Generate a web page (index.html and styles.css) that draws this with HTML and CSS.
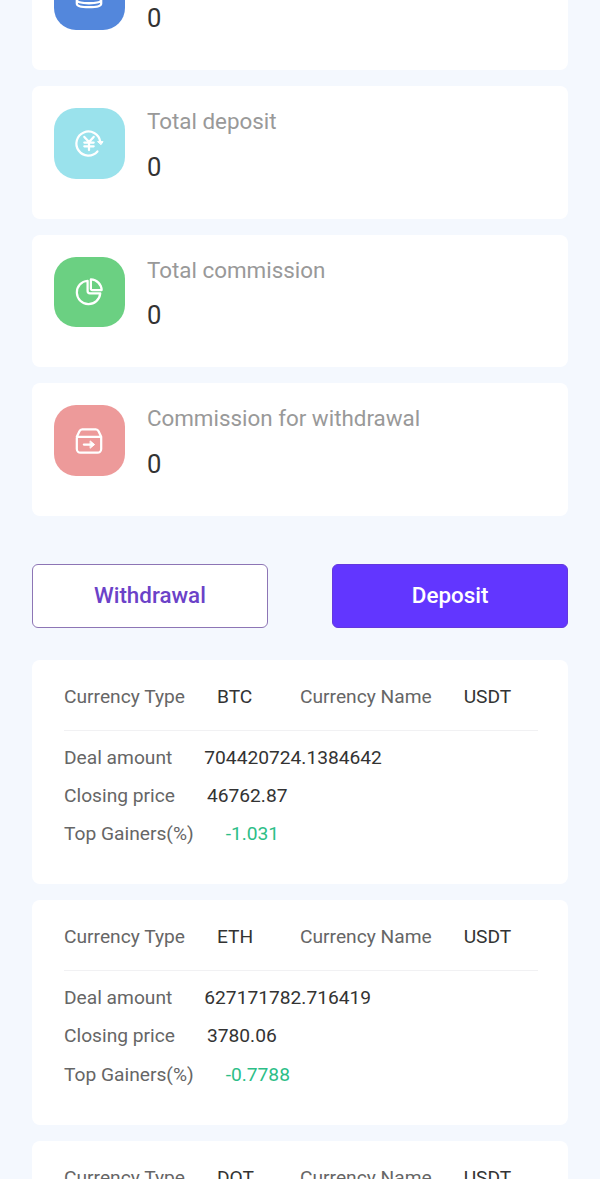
FILE: index.html
```
<!DOCTYPE html>
<html lang="en">
<head>
  <meta charset="UTF-8">
  <meta name="viewport" content="width=device-width, initial-scale=1.0">
  <title>Assets</title>
  <link rel="stylesheet" href="styles.css">
</head>
<body>
  <div class="page">
    <!-- totals -->
    <div class="stats">
      <div class="stat">
        <div class="icon blue">
          <svg viewBox="0 0 32 32"><ellipse cx="16" cy="8" rx="13" ry="4.5"/><path d="M3 8v17c0 2.500 5 4 13 4s13-1.500 13-4V8M3 21c0 2.500 5 3.800 13 3.800s13-1.300 13-3.800"/></svg>
        </div>
        <div>
          <div class="label"></div>
          <div class="value">0</div>
        </div>
      </div>
      <div class="stat">
        <div class="icon cyan">
          <svg viewBox="0 0 32 32"><path d="M25 25A12.800 12.800 0 1 1 28 14.500"/><path class="fill" d="M25.500 14.500h5.500l-2 3z"/><path d="M11 9.500l5 5.500 5-5.500M16 15v8.500M11 15.500h10M11 19.500h10"/></svg>
        </div>
        <div>
          <div class="label">Total deposit</div>
          <div class="value">0</div>
        </div>
      </div>
      <div class="stat">
        <div class="icon green">
          <svg viewBox="0 0 32 32"><path d="M14.500 4A12.500 12.500 0 1 0 28 17.500H17a2.500 2.500 0 0 1-2.500-2.500z"/><path d="M18 2.500A12 12 0 0 1 29.500 14H19.500a1.500 1.500 0 0 1-1.500-1.500z"/></svg>
        </div>
        <div>
          <div class="label">Total commission</div>
          <div class="value">0</div>
        </div>
      </div>
      <div class="stat">
        <div class="icon red">
          <svg viewBox="0 0 32 32"><path d="M3 11.500v13a4 4 0 0 0 4 4h18a4 4 0 0 0 4-4v-13zM3 11.500L5.800 5.500a3.500 3.500 0 0 1 3-2h14.400a3.500 3.500 0 0 1 3 2l2.800 6"/><path d="M10.500 19.800h9"/><path class="fill" d="M17.500 16.100l4.500 3.700-4.500 3.700z"/></svg>
        </div>
        <div>
          <div class="label">Commission for withdrawal</div>
          <div class="value">0</div>
        </div>
      </div>
    </div>

    <div class="buttons">
      <button class="btn">Withdrawal</button>
      <button class="btn primary">Deposit</button>
    </div>

    <!-- market list -->
    <div class="coins">
      <div class="coin">
        <div class="coin-head">
          <div class="row"><span>Currency Type</span><b>BTC</b></div>
          <div class="row"><span>Currency Name</span><b>USDT</b></div>
        </div>
        <div class="row"><span>Deal amount</span><b>704420724.1384642</b></div>
        <div class="row"><span>Closing price</span><b>46762.87</b></div>
        <div class="row"><span>Top Gainers(%)</span><b class="change">-1.031</b></div>
      </div>
      <div class="coin">
        <div class="coin-head">
          <div class="row"><span>Currency Type</span><b>ETH</b></div>
          <div class="row"><span>Currency Name</span><b>USDT</b></div>
        </div>
        <div class="row"><span>Deal amount</span><b>627171782.716419</b></div>
        <div class="row"><span>Closing price</span><b>3780.06</b></div>
        <div class="row"><span>Top Gainers(%)</span><b class="change">-0.7788</b></div>
      </div>
      <div class="coin">
        <div class="coin-head">
          <div class="row"><span>Currency Type</span><b>DOT</b></div>
          <div class="row"><span>Currency Name</span><b>USDT</b></div>
        </div>
      </div>
    </div>
  </div>
</body>
</html>
```
FILE: styles.css
```
* {
  box-sizing: border-box;
}

body {
  margin: 0;
  background: #f4f8fe;
  font-family: Roboto, "Liberation Sans", sans-serif;
  color: #333;
}

.page {
  height: 1179px;
  padding: 0 31.7px;
  overflow: hidden;
}

/* === TOTALS === */
.stats {
  display: flex;
  flex-direction: column;
  gap: 16px;
  margin-top: -62.6px;
}

.stat {
  display: flex;
  gap: 22px;
  height: 132.6px;
  padding: 22.2px;
  background: #fff;
  border-radius: 8px;
}

.icon {
  display: flex;
  align-items: center;
  justify-content: center;
  width: 71px;
  height: 70.5px;
  border-radius: 22px;
}

.icon svg {
  width: 30px;
  height: 30px;
  fill: none;
  stroke: #fff;
  stroke-width: 2.4;
  stroke-linejoin: round;
  stroke-linecap: round;
}

.icon .fill {
  fill: #fff;
  stroke-width: 1;
}

.blue { background: #5387dc; }
.cyan { background: #9ae2ec; }
.green { background: #6bd082; }
.red { background: #ed9a9a; }

.label {
  height: 27px;
  line-height: 27px;
  font-size: 22.4px;
  color: #999;
}

.value {
  margin-top: 16.4px;
  line-height: 30px;
  font-size: 25.6px;
}

/* === BUTTONS === */
.buttons {
  display: flex;
  justify-content: space-between;
  margin: 48px 0 31.6px;
}

.btn {
  width: 236.5px;
  height: 64.3px;
  padding: 0 0 2px;
  border: 1px solid #8d75b5;
  border-radius: 6px;
  background: #fff;
  color: #6b42c8;
  font-family: inherit;
  font-size: 22.4px;
  font-weight: 500;
}

.btn.primary {
  border-color: #6338dd;
  background: #6236ff;
  color: #fff;
}

/* === MARKET LIST === */
.coins {
  display: flex;
  flex-direction: column;
  gap: 16px;
}

.coin {
  flex-shrink: 0;
  height: 224.5px;
  padding: 0 30.6px 0 32.3px;
  background: #fff;
  border-radius: 8px;
  font-size: 19.2px;
}

.coin-head {
  display: grid;
  grid-template-columns: 236px 1fr;
  height: 71px;
  margin-bottom: 7.2px;
  border-bottom: 1px solid #f1f1f3;
}

.coin-head .row {
  height: 73px;
}

.row {
  display: flex;
  align-items: center;
  gap: 32px;
  height: 38.3px;
  white-space: nowrap;
}

.row span {
  color: #666;
}

.row b {
  font-weight: 400;
}

.row .change {
  color: #2cbe87;
}
```
